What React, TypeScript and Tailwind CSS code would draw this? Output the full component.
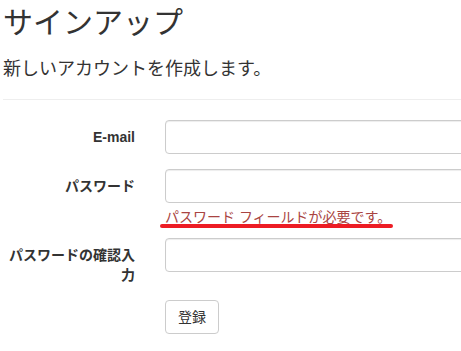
export default function App() {
  return (
    <div
      className="h-[351px] w-[461px] overflow-hidden bg-white text-[#333]"
      style={{ fontFamily: '"Liberation Sans", "Noto Sans CJK JP", sans-serif' }}
    >
      <div className="w-[640px] pl-[3px] pt-[6px]">
        <h2 className="text-[30px] leading-[33px] font-normal">サインアップ</h2>
        <h4 className="mt-[20px] text-[18px] leading-[20px] font-normal">
          新しいアカウントを作成します。
        </h4>
        <hr className="mt-[20px] mb-[20px] border-t border-[#eee]" />

        <form className="flex flex-col text-[14px] leading-[20px]">
          <div className="mb-[15px] flex">
            <label className="w-[147px] shrink-0 pt-[7px] pr-[15px] text-right font-bold">
              E-mail
            </label>
            <div className="pl-[15px]">
              <input className="h-[34px] w-[340px] rounded-[4px] border border-[#ccc] px-3 shadow-[inset_0_1px_1px_rgba(0,0,0,0.075)] outline-none" />
            </div>
          </div>

          <div className="flex">
            <label className="w-[147px] shrink-0 pt-[7px] pr-[15px] text-right font-bold">
              パスワード
            </label>
            <div className="pl-[15px]">
              <input
                type="password"
                className="h-[34px] w-[340px] rounded-[4px] border border-[#ccc] px-3 shadow-[inset_0_1px_1px_rgba(0,0,0,0.075)] outline-none"
              />
              <div className="relative mt-[4px] mb-[11px] text-[#a94442]">
                パスワード フィールドが必要です。
                <span className="absolute top-[17px] left-[-5px] h-[4px] w-[233px] rounded-full bg-[#ed1c24]" />
              </div>
            </div>
          </div>

          <div className="mb-[15px] flex">
            <label className="w-[147px] shrink-0 pt-[7px] pr-[15px] text-right font-bold">
              パスワードの確認入力
            </label>
            <div className="pl-[15px]">
              <input
                type="password"
                className="h-[34px] w-[340px] rounded-[4px] border border-[#ccc] px-3 shadow-[inset_0_1px_1px_rgba(0,0,0,0.075)] outline-none"
              />
            </div>
          </div>

          <div className="flex">
            <div className="w-[147px] shrink-0" />
            <div className="pl-[15px]">
              <button
                type="button"
                className="h-[34px] rounded-[4px] border border-[#ccc] bg-white px-[12px] text-[14px] text-[#333]"
              >
                登録
              </button>
            </div>
          </div>
        </form>
      </div>
    </div>
  );
}
